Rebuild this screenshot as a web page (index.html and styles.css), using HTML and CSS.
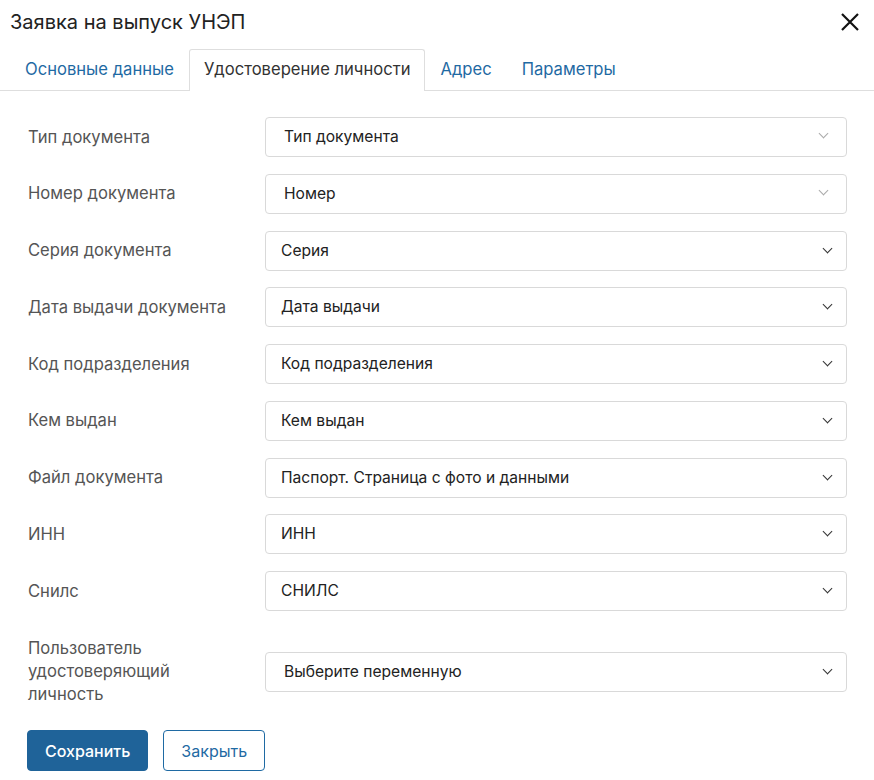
FILE: index.html
```html
<!DOCTYPE html>
<html lang="ru">
  <head>
    <meta charset="UTF-8" />
    <meta name="viewport" content="width=device-width, initial-scale=1.0" />
    <title>Заявка на выпуск УНЭП</title>
    <link rel="stylesheet" href="styles.css">
  </head>
  <body>
    <div class="modal">
      <div class="modal-header">
        <h2 class="modal-title">Заявка на выпуск УНЭП</h2>
        <button class="close" aria-label="Закрыть">
          <svg width="20" height="20" viewBox="0 0 20 20">
            <path d="M2 2 L18 18 M18 2 L2 18" stroke="#111" stroke-width="2.2" fill="none" />
          </svg>
        </button>
      </div>

      <ul class="tabs">
        <li class="tab">Основные данные</li>
        <li class="tab active">Удостоверение личности</li>
        <li class="tab">Адрес</li>
        <li class="tab">Параметры</li>
      </ul>

      <form class="form">
        <div class="row">
          <label>Тип документа</label>
          <div class="select muted">Тип документа<span class="chevron"></span></div>
        </div>
        <div class="row">
          <label>Номер документа</label>
          <div class="select muted">Номер<span class="chevron"></span></div>
        </div>
        <div class="row">
          <label>Серия документа</label>
          <div class="select">Серия<span class="chevron"></span></div>
        </div>
        <div class="row">
          <label>Дата выдачи документа</label>
          <div class="select">Дата выдачи<span class="chevron"></span></div>
        </div>
        <div class="row">
          <label>Код подразделения</label>
          <div class="select">Код подразделения<span class="chevron"></span></div>
        </div>
        <div class="row">
          <label>Кем выдан</label>
          <div class="select">Кем выдан<span class="chevron"></span></div>
        </div>
        <div class="row">
          <label>Файл документа</label>
          <div class="select">Паспорт. Страница с фото и данными<span class="chevron"></span></div>
        </div>
        <div class="row">
          <label>ИНН</label>
          <div class="select">ИНН<span class="chevron"></span></div>
        </div>
        <div class="row">
          <label>Снилс</label>
          <div class="select">СНИЛС<span class="chevron"></span></div>
        </div>
        <div class="row tall">
          <label>Пользователь удостоверяющий личность</label>
          <div class="select wide-pad">Выберите переменную<span class="chevron"></span></div>
        </div>

        <div class="actions">
          <button type="button" class="btn primary">Сохранить</button>
          <button type="button" class="btn">Закрыть</button>
        </div>
      </form>
    </div>
  </body>
</html>
```

FILE: styles.css
```css
body {
  margin: 0;
  background: #fff;
  font-family: Inter, "Noto Sans", sans-serif;
  color: #333;
}

.modal {
  width: 874px;
}

.modal-header {
  display: flex;
  justify-content: space-between;
  align-items: center;
  padding: 8px 14px 0 10px;
  height: 28px;
}

.modal-title {
  margin: 0;
  font-size: 20px;
  font-weight: 400;
  color: #222;
}

.close {
  border: none;
  background: none;
  padding: 0;
  width: 20px;
  height: 20px;
  cursor: pointer;
}

.tabs {
  display: flex;
  list-style: none;
  margin: 13px 0 0;
  padding: 0 0 0 10px;
  border-bottom: 1px solid #dedede;
}

.tab {
  padding: 0 14px;
  height: 41px;
  line-height: 39px;
  font-size: 16.6px;
  color: #1f6aa3;
  border: 1px solid transparent;
  border-bottom: none;
  margin-bottom: -1px;
  cursor: pointer;
}

.tab.active {
  color: #333;
  background: #fff;
  border-color: #dedede;
  border-radius: 3px 3px 0 0;
}

.form {
  padding: 26px 27px 0 28px;
}

.row {
  display: flex;
  align-items: center;
  margin-bottom: 16.75px;
}

.row label {
  width: 237px;
  flex-shrink: 0;
  font-size: 16.6px;
  line-height: 23px;
  color: #555;
  padding-right: 20px;
  box-sizing: border-box;
}

.row.tall {
  margin-top: 26px;
  margin-bottom: 0;
}

.row.tall label {
  padding-right: 60px;
}

.select {
  position: relative;
  flex: 1;
  height: 40px;
  box-sizing: border-box;
  border: 1px solid #d9d9d9;
  border-radius: 4px;
  padding: 0 40px 0 15px;
  line-height: 38px;
  font-size: 15.6px;
  color: #222;
}

.select.muted,
.select.wide-pad {
  padding-left: 18px;
}

.chevron {
  position: absolute;
  right: 15px;
  top: 13px;
  width: 6px;
  height: 6px;
  border-right: 1.5px solid #333;
  border-bottom: 1.5px solid #333;
  transform: rotate(45deg);
}

.select.muted .chevron {
  right: 19px;
  border-color: #aaa;
  border-width: 0 1px 1px 0;
  top: 12px;
}

.actions {
  display: flex;
  gap: 15px;
  margin-top: 24px;
}

.btn {
  height: 41px;
  padding: 0 17px;
  font-family: inherit;
  font-size: 16px;
  border: 1px solid #1f6aa3;
  border-radius: 4px;
  background: #fff;
  color: #1f6aa3;
  cursor: pointer;
}

.btn.primary {
  margin-left: -1px;
  background: #1f6399;
  border-color: #1f6399;
  color: #fff;
  font-weight: 500;
}
```
